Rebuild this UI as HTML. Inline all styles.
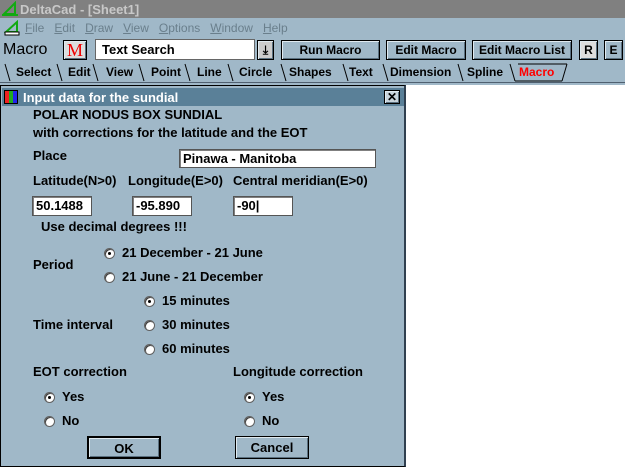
<!DOCTYPE html><html><head><style>
*{margin:0;padding:0;box-sizing:border-box}
body{width:625px;height:467px;overflow:hidden;background:#a0b8c8;font-family:"Liberation Sans",sans-serif;font-size:12px;font-weight:bold;color:#000;position:relative}
.a{position:absolute;white-space:nowrap}
.d{font-size:13px}
.btn{position:absolute;border:1px solid #000;background:#a0b8c8;box-shadow:inset 1px 1px 0 #e0eaf0,inset -1px -1px 0 #5a7080;text-align:center}
.inp{position:absolute;background:#fff;border:1px solid #555;box-shadow:inset 1px 1px 0 #808080;padding-left:3px;font-size:13px;line-height:17px}
.r{position:absolute;width:11px;height:11px;border-radius:50%;background:#fff;border:1px solid #606060;box-shadow:inset 1px 1px 0 #404040}
.r.on::after{content:"";position:absolute;left:3px;top:3px;width:3px;height:3px;background:#000;border-radius:50%}
.tab{position:absolute;top:64px;height:17px;font-size:12px;line-height:17px}
</style></head><body>
<div class="a" style="left:0;top:0;width:625px;height:18px;background:#808080"></div>
<div class="a" style="left:2px;top:1px;width:16px;height:15px"><svg width="16" height="15"><path d="M2 13 L13 2 L13 13 Z" fill="none" stroke="#1a1" stroke-width="2"/><path d="M0 14h16" stroke="#1a1" stroke-width="2"/></svg></div>
<div class="a" style="left:20px;top:2px;color:#c8c8c8;font-size:13px">DeltaCad - [Sheet1]</div>
<div class="a" style="left:4px;top:20px"><svg width="16" height="16"><path d="M2 12 L13 2 L13 12 Z" fill="none" stroke="#1a1" stroke-width="2"/><rect x="1" y="12" width="14" height="3" fill="#fff" stroke="#000"/></svg></div>
<div class="a" style="left:25px;top:21px;font-weight:normal;color:#6a7f8c;font-size:12px"><u>F</u>ile &nbsp;&nbsp;<u>E</u>dit &nbsp;&nbsp;<u>D</u>raw &nbsp;&nbsp;<u>V</u>iew &nbsp;&nbsp;<u>O</u>ptions &nbsp;&nbsp;<u>W</u>indow &nbsp;&nbsp;<u>H</u>elp</div>
<div class="a" style="left:3px;top:41px;font-size:16px;font-weight:normal">Macro</div>
<div class="btn" style="left:63px;top:40px;width:24px;height:20px;background:#ddd;color:#e00;font-family:'Liberation Serif',serif;font-size:18px;line-height:18px;font-weight:normal">M</div>
<div class="a" style="left:95px;top:39px;width:160px;height:21px;background:#fff;border:1px solid #666;padding-left:6px;line-height:19px;font-size:13px">Text Search</div>
<div class="btn" style="left:257px;top:40px;width:17px;height:20px;background:#ccc;line-height:18px">&#x2913;</div>
<div class="btn" style="left:281px;top:40px;width:99px;height:20px;line-height:18px">Run Macro</div>
<div class="btn" style="left:386px;top:40px;width:80px;height:20px;line-height:18px">Edit Macro</div>
<div class="btn" style="left:472px;top:40px;width:100px;height:20px;line-height:18px">Edit Macro List</div>
<div class="btn" style="left:579px;top:40px;width:19px;height:20px;background:#ddd;line-height:18px">R</div>
<div class="btn" style="left:604px;top:40px;width:19px;height:20px;line-height:18px">E</div>
<div class="a" style="left:0;top:82px;width:625px;height:1px;background:#506070"></div>
<svg class="a" style="left:0;top:62px" width="625" height="21"><path d="M5 2 L10 19 M57 2 L62 19 M93 2 L98 19 M139 2 L144 19 M185 2 L190 19 M228 2 L233 19 M281 2 L286 19 M343 2 L348 19 M383 2 L388 19 M458 2 L463 19 M510 2 L515 19 M567 2 L562 19 M515 19 L562 19 M518 2 L567 2" stroke="#000" fill="none"/></svg>
<div class="tab" style="left:16px">Select</div>
<div class="tab" style="left:68px">Edit</div>
<div class="tab" style="left:106px">View</div>
<div class="tab" style="left:151px">Point</div>
<div class="tab" style="left:197px">Line</div>
<div class="tab" style="left:239px">Circle</div>
<div class="tab" style="left:289px">Shapes</div>
<div class="tab" style="left:349px">Text</div>
<div class="tab" style="left:390px">Dimension</div>
<div class="tab" style="left:467px">Spline</div>
<div class="tab" style="left:519px;color:#f00">Macro</div>
<div class="a" style="left:406px;top:85px;width:219px;height:382px;background:#fff"></div>
<div class="a" style="left:0;top:85px;width:406px;height:382px;border:1px solid #000;border-right:2px solid #304050;background:#a0b8c8"></div>
<div class="a" style="left:2px;top:88px;width:402px;height:18px;background:#5a8098"></div>
<div class="a" style="left:4px;top:90px;width:14px;height:14px;background:linear-gradient(90deg,#e22 0 33%,#2a2 33% 66%,#22e 66%);border:1px solid #000"></div>
<div class="a" style="left:23px;top:90px;color:#fff;font-size:13px">Input data for the sundial</div>
<div class="btn" style="left:384px;top:90px;width:16px;height:14px;background:#c8d4dc;line-height:12px;font-size:12px">&#x2715;</div>
<div class="d">
<div class="a" style="left:33px;top:107px">POLAR NODUS BOX SUNDIAL</div>
<div class="a" style="left:33px;top:125px">with corrections for the latitude and the EOT</div>
<div class="a" style="left:33px;top:148px">Place</div>
<div class="inp" style="left:179px;top:149px;width:197px;height:19px">Pinawa - Manitoba</div>
<div class="a" style="left:33px;top:173px">Latitude(N&gt;0)</div>
<div class="a" style="left:128px;top:173px">Longitude(E&gt;0)</div>
<div class="a" style="left:233px;top:173px">Central meridian(E&gt;0)</div>
<div class="inp" style="left:32px;top:196px;width:60px;height:20px">50.1488</div>
<div class="inp" style="left:132px;top:196px;width:60px;height:20px">-95.890</div>
<div class="inp" style="left:233px;top:196px;width:60px;height:20px">-90|</div>
<div class="a" style="left:41px;top:219px">Use decimal degrees !!!</div>
<div class="a" style="left:33px;top:257px">Period</div>
<div class="r on" style="left:104px;top:248px"></div><div class="a" style="left:122px;top:245px">21 December - 21 June</div>
<div class="r" style="left:104px;top:272px"></div><div class="a" style="left:122px;top:269px">21 June - 21 December</div>
<div class="r on" style="left:144px;top:296px"></div><div class="a" style="left:162px;top:293px">15 minutes</div>
<div class="a" style="left:33px;top:317px">Time interval</div>
<div class="r" style="left:144px;top:320px"></div><div class="a" style="left:162px;top:317px">30 minutes</div>
<div class="r" style="left:144px;top:344px"></div><div class="a" style="left:162px;top:341px">60 minutes</div>
<div class="a" style="left:33px;top:364px">EOT correction</div>
<div class="a" style="left:233px;top:364px">Longitude correction</div>
<div class="r on" style="left:44px;top:392px"></div><div class="a" style="left:62px;top:389px">Yes</div>
<div class="r" style="left:44px;top:416px"></div><div class="a" style="left:62px;top:413px">No</div>
<div class="r on" style="left:244px;top:392px"></div><div class="a" style="left:262px;top:389px">Yes</div>
<div class="r" style="left:244px;top:416px"></div><div class="a" style="left:262px;top:413px">No</div>
<div class="btn" style="left:87px;top:436px;width:74px;height:23px;line-height:21px;border-width:2px">OK</div>
<div class="btn" style="left:235px;top:436px;width:74px;height:23px;line-height:21px">Cancel</div>
</div>
</body></html>
